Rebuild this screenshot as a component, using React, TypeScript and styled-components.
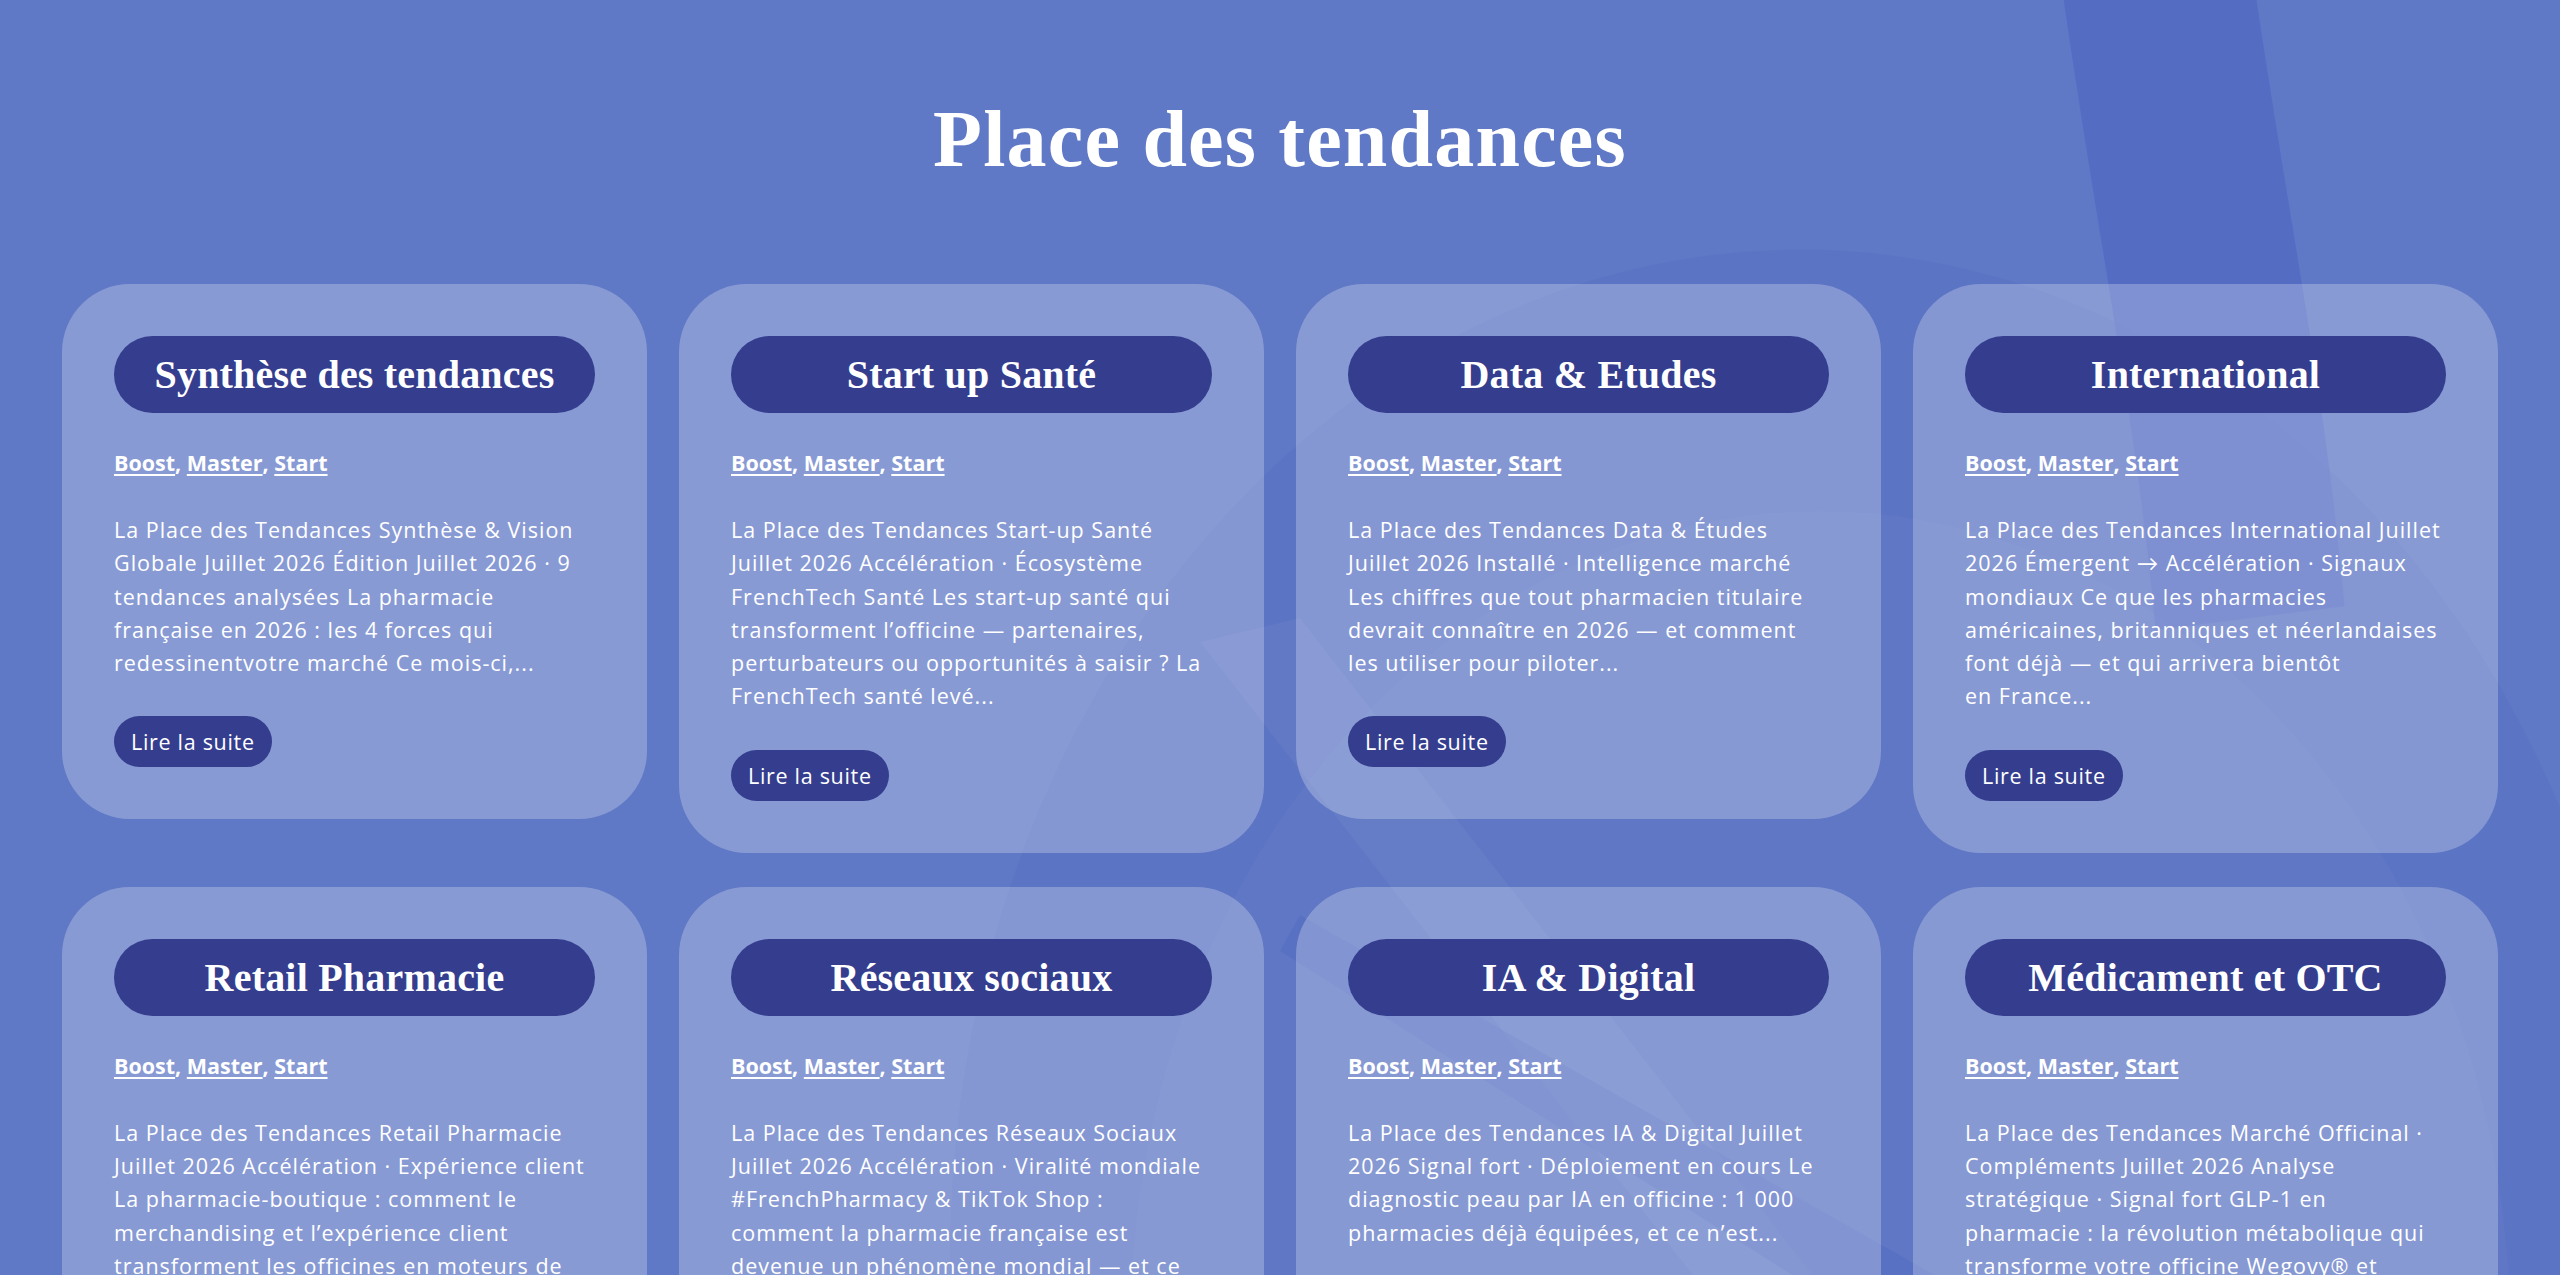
import styled, { createGlobalStyle } from "styled-components"

const GlobalStyle = createGlobalStyle`
  html, body {
    margin: 0;
    padding: 0;
    background: #6079c6;
  }
  * {
    box-sizing: border-box;
  }
`

const Page = styled.div`
  position: relative;
  min-height: 1275px;
  overflow: hidden;
  background: #6079c6;
  font-family: "Open Sans", Lato, sans-serif;
  color: #fff;
`

const Decor = styled.svg`
  position: absolute;
  inset: 0;
  width: 100%;
  height: 100%;
  pointer-events: none;
  z-index: 0;
`

const Content = styled.main`
  position: relative;
  z-index: 1;
  padding: 93px 62px 60px;
`

const Title = styled.h1`
  margin: 0 0 99px;
  text-align: center;
  font-family: "Liberation Serif", serif;
  font-weight: 700;
  font-size: 80px;
  letter-spacing: 1.2px;
  line-height: 92px;
  color: #fff;
`

const Grid = styled.section`
  display: grid;
  grid-template-columns: repeat(4, 1fr);
  column-gap: 32px;
  row-gap: 34px;
  align-items: start;
`

const Card = styled.article`
  display: flex;
  flex-direction: column;
  align-items: flex-start;
  padding: 52px;
  border-radius: 68px;
  background: rgba(255, 255, 255, 0.25);
`

const Heading = styled.h2`
  display: flex;
  align-items: center;
  justify-content: center;
  width: 100%;
  height: 77px;
  margin: 0;
  border-radius: 40px;
  background: #343d8e;
  font-family: "Liberation Serif", serif;
  font-weight: 700;
  font-size: 40px;
  letter-spacing: 0.2px;
  color: #fff;
`

const Tags = styled.p`
  margin: 36px 0 0;
  font-size: 21.5px;
  font-weight: 700;
  line-height: 28px;
  letter-spacing: 0;
  a {
    color: #fff;
    text-decoration: underline;
    text-underline-offset: 3px;
    text-decoration-thickness: 2px;
  }
`

const Excerpt = styled.p`
  margin: 36px 0 0;
  font-size: 21.5px;
  letter-spacing: 1px;
  line-height: 33.3px;
  color: #fff;
`

const ReadMore = styled.a`
  display: inline-flex;
  align-items: center;
  height: 51px;
  margin-top: 37px;
  padding: 0 17px;
  border-radius: 26px;
  background: #343d8e;
  color: #fff;
  font-size: 21.5px;
  letter-spacing: 0.7px;
  font-weight: 500;
  text-decoration: none;
`

interface Trend {
  title: string
  excerpt: string
}

const trends: Trend[] = [
  {
    title: "Synthèse des tendances",
    excerpt:
      "La Place des Tendances Synthèse & Vision Globale Juillet 2026 Édition Juillet 2026 · 9 tendances analysées La pharmacie française en 2026 : les 4 forces qui redessinentvotre marché Ce mois-ci,...",
  },
  {
    title: "Start up Santé",
    excerpt:
      "La Place des Tendances Start-up Santé Juillet 2026 Accélération · Écosystème FrenchTech Santé Les start-up santé qui transforment l’officine — partenaires, perturbateurs ou opportunités à saisir ? La FrenchTech santé levé...",
  },
  {
    title: "Data & Etudes",
    excerpt:
      "La Place des Tendances Data & Études Juillet 2026 Installé · Intelligence marché Les chiffres que tout pharmacien titulaire devrait connaître en 2026 — et comment les utiliser pour piloter...",
  },
  {
    title: "International",
    excerpt:
      "La Place des Tendances International Juillet 2026 Émergent → Accélération · Signaux mondiaux Ce que les pharmacies américaines, britanniques et néerlandaises font déjà — et qui arrivera bientôt en\u00a0France...",
  },
  {
    title: "Retail Pharmacie",
    excerpt:
      "La Place des Tendances Retail Pharmacie Juillet 2026 Accélération · Expérience client La pharmacie-boutique : comment le merchandising et l’expérience client transforment les officines en moteurs de croissance...",
  },
  {
    title: "Réseaux sociaux",
    excerpt:
      "La Place des Tendances Réseaux Sociaux Juillet 2026 Accélération · Viralité mondiale #FrenchPharmacy & TikTok Shop : comment la pharmacie française est devenue un phénomène mondial — et ce que...",
  },
  {
    title: "IA & Digital",
    excerpt:
      "La Place des Tendances IA & Digital Juillet 2026 Signal fort · Déploiement en cours Le diagnostic peau par IA en officine : 1 000 pharmacies déjà équipées, et ce n’est...",
  },
  {
    title: "Médicament et OTC",
    excerpt:
      "La Place des Tendances Marché Officinal · Compléments Juillet 2026 Analyse stratégique · Signal fort GLP-1 en pharmacie : la révolution métabolique qui transforme votre officine Wegovy® et Mounjaro...",
  },
]

const tags = ["Boost", "Master", "Start"]

function TrendCard({ title, excerpt }: Trend) {
  return (
    <Card>
      <Heading>{title}</Heading>
      <Tags>
        {tags.map((t, i) => (
          <span key={t}>
            <a href="#">{t}</a>
            {i < tags.length - 1 ? ", " : ""}
          </span>
        ))}
      </Tags>
      <Excerpt>{excerpt}</Excerpt>
      <ReadMore href="#">Lire la suite</ReadMore>
    </Card>
  )
}

export default function App() {
  return (
    <Page>
      <GlobalStyle />
      <Decor viewBox="0 0 2560 1275" preserveAspectRatio="none">
        <circle cx="1800" cy="1060" r="850" fill="#4f67c0" opacity="0.25" />
        <circle cx="1820" cy="1120" r="690" fill="#7088cc" opacity="0.2" />
        <path
          d="M2150 -60 C2185 160 2230 330 2250 520"
          stroke="#5068c2"
          strokeWidth="190"
          fill="none"
          opacity="0.7"
        />
        <path d="M1200 540 L1300 520 L2000 1275 L1880 1275 Z" fill="#ffffff" opacity="0.04" />
        <path d="M1280 800 L1300 770 L1950 1080 L1900 1130 Z" fill="#4f67c0" opacity="0.35" />
      </Decor>
      <Content>
        <Title>Place des tendances</Title>
        <Grid>
          {trends.map((t) => (
            <TrendCard key={t.title} {...t} />
          ))}
        </Grid>
      </Content>
    </Page>
  )
}
